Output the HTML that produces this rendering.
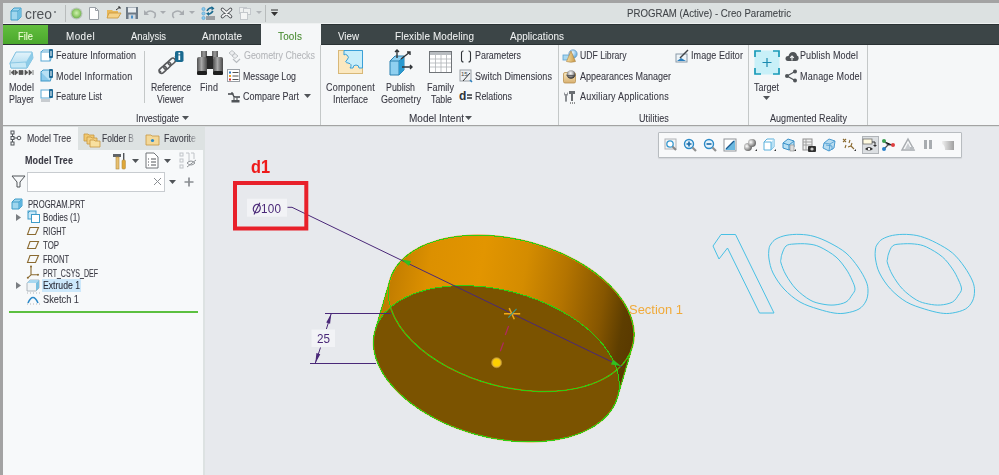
<!DOCTYPE html>
<html><head><meta charset="utf-8"><style>
html,body{margin:0;padding:0;width:999px;height:475px;overflow:hidden;position:relative;font-family:"Liberation Sans",sans-serif}
.t{position:absolute;white-space:nowrap;line-height:1;transform-origin:0 0;-webkit-text-stroke:0.08px currentColor}
svg{overflow:visible}
</style></head><body>
<div style="position:absolute;left:0px;top:0px;width:999px;height:475px;background:#a3a3a3"></div>
<div style="position:absolute;left:3px;top:3px;width:996px;height:20px;background:#dce1e1"></div>
<div style="position:absolute;left:3px;top:23px;width:996px;height:1px;background:#eef1f1"></div>
<div style="position:absolute;left:3px;top:24px;width:996px;height:21px;background:#3c4547"></div>
<div style="position:absolute;left:3px;top:24px;width:996px;height:1px;background:#2a3234"></div>
<div style="position:absolute;left:3px;top:44px;width:996px;height:1px;background:#2a3234"></div>
<div style="position:absolute;left:3px;top:45px;width:996px;height:80px;background:#f5f7f8"></div>
<div style="position:absolute;left:3px;top:125.6px;width:996px;height:1.8px;background:#d9dede"></div>
<div style="position:absolute;left:3px;top:127px;width:202px;height:348px;background:#dde2e2"></div>
<div style="position:absolute;left:3px;top:150px;width:199.5px;height:325px;background:#f7f9fa"></div>
<div style="position:absolute;left:3px;top:127px;width:75px;height:23px;background:#f5f7f8"></div>
<div style="position:absolute;left:205px;top:127px;width:794px;height:348px;background:#e7e9ed"></div>
<svg style="position:absolute;left:9px;top:7px" width="13" height="14" viewBox="0 0 13 14"><path d="M2 4 L5 1 L12 1 L12 10 L9 13 L2 13 Z" fill="#9fd6ee" stroke="#3f9cc8" stroke-width="1"/><path d="M2 4 L9 4 L12 1 M9 4 L9 13" fill="none" stroke="#3f9cc8" stroke-width="1"/><path d="M9 4 L12 1 L12 10 L9 13Z" fill="#6dbde0"/></svg>
<div class="t" style="left:25.0px;top:6.5px;font-size:14px;color:#505458;transform:scaleX(0.991);letter-spacing:0.00px;-webkit-text-stroke:0">creo</div>
<div style="position:absolute;left:54px;top:11px;width:2px;height:2px;background:#707478;border-radius:1px"></div>
<div style="position:absolute;left:65px;top:5px;width:1px;height:17px;background:#b8bcbc"></div>
<svg style="position:absolute;left:70px;top:7px" width="13" height="13" viewBox="0 0 13 13"><defs><radialGradient id="gc" cx="50%" cy="45%" r="55%"><stop offset="0" stop-color="#d0f0b0"/><stop offset="0.6" stop-color="#98d070"/><stop offset="1" stop-color="#70b050"/></radialGradient></defs><circle cx="6.5" cy="6.5" r="6" fill="#b8c4b8"/><circle cx="6.5" cy="6.5" r="4.8" fill="url(#gc)"/></svg>
<svg style="position:absolute;left:88px;top:6px" width="12" height="15" viewBox="0 0 12 15"><path d="M1.5 1.5 L7.5 1.5 L10.5 4.5 L10.5 13.5 L1.5 13.5Z" fill="#fff" stroke="#9aa0a6"/><path d="M7.5 1.5 L7.5 4.5 L10.5 4.5" fill="none" stroke="#9aa0a6"/></svg>
<svg style="position:absolute;left:106px;top:6px" width="16" height="14" viewBox="0 0 16 14"><path d="M1 4 L6 4 L7 5 L12 5 L12 12 L1 12Z" fill="#e8b85a"/><path d="M3 7 L15 7 L12 12 L1 12Z" fill="#f5d288" stroke="#c8963a" stroke-width="0.8"/><path d="M10 4 L14 1 M12 1 L14 1 L14 3" stroke="#333" fill="none" stroke-width="1"/></svg>
<svg style="position:absolute;left:125px;top:6px" width="14" height="14" viewBox="0 0 14 14"><rect x="1" y="1" width="12" height="12" fill="#6e7a86"/><rect x="3" y="1.5" width="8" height="5" fill="#e8ecef"/><rect x="3.5" y="8.5" width="7" height="4.5" fill="#d0d8e0"/><rect x="6" y="9.5" width="2" height="3" fill="#4a90c8"/></svg>
<svg style="position:absolute;left:143px;top:8px" width="14" height="11" viewBox="0 0 14 11"><path d="M3 5 Q7 1 12 5 Q13 8 11 10" fill="none" stroke="#a8acb0" stroke-width="1.6"/><path d="M1 2 L1 7 L6 7Z" fill="#a8acb0"/></svg>
<svg style="position:absolute;left:160px;top:11px" width="6" height="4" viewBox="0 0 6 4"><path d="M0 0 L6 0 L3 3Z" fill="#a8acb0"/></svg>
<svg style="position:absolute;left:171px;top:8px" width="14" height="11" viewBox="0 0 14 11"><path d="M11 5 Q7 1 2 5 Q1 8 3 10" fill="none" stroke="#a8acb0" stroke-width="1.6"/><path d="M13 2 L13 7 L8 7Z" fill="#a8acb0"/></svg>
<svg style="position:absolute;left:189px;top:11px" width="6" height="4" viewBox="0 0 6 4"><path d="M0 0 L6 0 L3 3Z" fill="#a8acb0"/></svg>
<svg style="position:absolute;left:201px;top:5px" width="15" height="16" viewBox="0 0 15 16"><circle cx="2.5" cy="4" r="1.6" fill="#8ccbec" stroke="#4a9ad0" stroke-width="0.6"/><circle cx="2.5" cy="8.5" r="1.6" fill="#8ccbec" stroke="#4a9ad0" stroke-width="0.6"/><circle cx="2.5" cy="13" r="1.6" fill="#8ccbec" stroke="#4a9ad0" stroke-width="0.6"/><rect x="5" y="11" width="9" height="4" fill="#9a9ea2"/><path d="M6 6 Q8 2 12 3 M12 6 Q10 9 7 9" fill="none" stroke="#1a6a90" stroke-width="1.5"/><path d="M10.5 1 L13.5 3.5 L10.5 5.5Z M8 7 L5 8.5 L8 11Z" fill="#1a6a90"/></svg>
<svg style="position:absolute;left:220px;top:7px" width="13" height="12" viewBox="0 0 13 12"><path d="M2.5 2.5 L10.5 9.5 M10.5 2.5 L2.5 9.5" stroke="#505458" stroke-width="3.6" stroke-linecap="round"/><path d="M2.5 2.5 L10.5 9.5 M10.5 2.5 L2.5 9.5" stroke="#f4f4f4" stroke-width="1.7" stroke-linecap="round"/></svg>
<svg style="position:absolute;left:238px;top:6px" width="14" height="15" viewBox="0 0 14 15"><rect x="1.5" y="1.5" width="7" height="6" fill="#eef0f0" stroke="#c4c8cc"/><rect x="5.5" y="2.5" width="7" height="6" fill="#eef0f0" stroke="#c4c8cc"/><rect x="2.5" y="6.5" width="7" height="7" fill="#f4f5f5" stroke="#c4c8cc"/></svg>
<svg style="position:absolute;left:256px;top:11px" width="6" height="4" viewBox="0 0 6 4"><path d="M0 0 L6 0 L3 3Z" fill="#b0b4b8"/></svg>
<div style="position:absolute;left:265px;top:5px;width:1px;height:17px;background:#b8bcbc"></div>
<svg style="position:absolute;left:271px;top:10px" width="8" height="6" viewBox="0 0 8 6"><path d="M0 0 L7 0" stroke="#333" stroke-width="1"/><path d="M0 2 L7 2 L3.5 6Z" fill="#333"/></svg>
<div class="t" style="left:627.0px;top:8.0px;font-size:11px;color:#404448;transform:scaleX(0.877);letter-spacing:0.00px;">PROGRAM (Active) - Creo Parametric</div>
<div style="position:absolute;left:3px;top:25px;width:45px;height:19px;background:linear-gradient(#62be3e,#4aa82c)"></div>
<div class="t" style="left:18.0px;top:30.6px;font-size:11px;color:#f0fcd8;transform:scaleX(0.846);letter-spacing:0.00px;">File</div>
<div class="t" style="left:66.0px;top:30.6px;font-size:11px;color:#f0f2f2;transform:scaleX(0.900);letter-spacing:0.45px;-webkit-text-stroke:0.05px currentColor">Model</div>
<div class="t" style="left:131.0px;top:30.6px;font-size:11px;color:#f0f2f2;transform:scaleX(0.854);letter-spacing:0.00px;-webkit-text-stroke:0.05px currentColor">Analysis</div>
<div class="t" style="left:202.0px;top:30.6px;font-size:11px;color:#f0f2f2;transform:scaleX(0.900);letter-spacing:0.05px;-webkit-text-stroke:0.05px currentColor">Annotate</div>
<div style="position:absolute;left:261px;top:24px;width:60px;height:21px;background:#f5f7f8"></div>
<div class="t" style="left:278.0px;top:30.5px;font-size:11px;color:#468a2e;transform:scaleX(0.900);letter-spacing:0.20px;">Tools</div>
<div class="t" style="left:338.0px;top:30.6px;font-size:11px;color:#f0f2f2;transform:scaleX(0.888);letter-spacing:0.00px;-webkit-text-stroke:0.05px currentColor">View</div>
<div class="t" style="left:395.0px;top:30.6px;font-size:11px;color:#f0f2f2;transform:scaleX(0.900);letter-spacing:0.13px;-webkit-text-stroke:0.05px currentColor">Flexible Modeling</div>
<div class="t" style="left:510.0px;top:30.6px;font-size:11px;color:#f0f2f2;transform:scaleX(0.900);letter-spacing:0.06px;-webkit-text-stroke:0.05px currentColor">Applications</div>
<svg style="position:absolute;left:8px;top:49px" width="27" height="26" viewBox="0 0 27 26"><defs><linearGradient id="mp" x1="0" y1="0" x2="0" y2="1"><stop offset="0" stop-color="#e4f4fb"/><stop offset="1" stop-color="#a8d8ee"/></linearGradient></defs><path d="M2 14 L8 3 L24 3 L25 9 L19 19 L3 19 Z" fill="url(#mp)" stroke="#7ec0e0" stroke-width="1"/><path d="M19 19 L25 9 L24 3 L18 13Z" fill="#8ccbe8"/><path d="M2 14 L3 19 L19 19 L18 13Z" fill="#c6e8f6" stroke="#7ec0e0" stroke-width="0.8"/><path d="M2 21 L2 26 M3 23.5 L6 21 L6 26Z M10 23.5 L7 21 L7 26Z M11 21.5 h4 v4 h-4Z M17 21 L20 23.5 L17 26Z M21 21 L24 23.5 L21 26Z M25 21 L25 26" fill="#555" stroke="#555" stroke-width="0.7"/></svg>
<div class="t" style="left:9.0px;top:82.5px;font-size:10px;color:#383842;transform:scaleX(0.900);letter-spacing:0.11px;">Model</div>
<div class="t" style="left:9.0px;top:94.5px;font-size:10px;color:#383842;transform:scaleX(0.882);letter-spacing:0.00px;">Player</div>
<svg style="position:absolute;left:40px;top:49px" width="14" height="14" viewBox="0 0 14 14"><rect x="1" y="3" width="9" height="9" fill="#fff" stroke="#5aaad6"/><path d="M1 3 L3 1 L11 1 L11 10 L10 12" fill="none" stroke="#5aaad6"/><rect x="9" y="0" width="4" height="9" rx="1" fill="#1e6a96"/><rect x="10.5" y="2" width="1" height="5" fill="#fff"/></svg>
<div class="t" style="left:56.0px;top:51.2px;font-size:10px;color:#383842;transform:scaleX(0.900);letter-spacing:0.09px;">Feature Information</div>
<svg style="position:absolute;left:40px;top:69px" width="14" height="14" viewBox="0 0 14 14"><rect x="1" y="3" width="9" height="9" fill="#8ccbec" stroke="#3e98c8"/><path d="M1 3 L3 1 L11 1 L11 10 L10 12" fill="#b8e0f4" stroke="#3e98c8"/><rect x="9" y="0" width="4" height="9" rx="1" fill="#1e6a96"/><rect x="10.5" y="2" width="1" height="5" fill="#fff"/></svg>
<div class="t" style="left:56.0px;top:72.0px;font-size:10px;color:#383842;transform:scaleX(0.900);letter-spacing:0.29px;">Model Information</div>
<svg style="position:absolute;left:40px;top:89px" width="14" height="14" viewBox="0 0 14 14"><rect x="1" y="1" width="9" height="8" fill="#fff" stroke="#5aaad6"/><rect x="1" y="10" width="9" height="3" fill="#c8ccd0"/><rect x="9" y="0" width="4" height="9" rx="1" fill="#1e6a96"/><rect x="10.5" y="2" width="1" height="5" fill="#fff"/></svg>
<div class="t" style="left:56.0px;top:92.0px;font-size:10px;color:#383842;transform:scaleX(0.871);letter-spacing:0.00px;">Feature List</div>
<div style="position:absolute;left:144px;top:51px;width:1px;height:52px;background:#c4c8c8"></div>
<svg style="position:absolute;left:158px;top:49px" width="27" height="26" viewBox="0 0 27 26"><g transform="rotate(-42 10 16)" fill="none" stroke="#58595c" stroke-width="1.6"><rect x="-1" y="13.5" width="8" height="5" rx="2.5"/><rect x="5" y="13.5" width="8" height="5" rx="2.5"/><rect x="11" y="13.5" width="8" height="5" rx="2.5"/></g><path d="M1 24 L3 22 M17 8 L19 6" stroke="#58595c" stroke-width="1.4"/><rect x="17" y="2" width="8.5" height="11" rx="1.8" fill="#1a6a90"/><rect x="20.4" y="3.6" width="1.8" height="1.8" fill="#fff"/><rect x="20.4" y="6.4" width="1.8" height="4.6" fill="#fff"/></svg>
<div class="t" style="left:151.0px;top:82.5px;font-size:10px;color:#383842;transform:scaleX(0.867);letter-spacing:0.00px;">Reference</div>
<div class="t" style="left:157.0px;top:94.5px;font-size:10px;color:#383842;transform:scaleX(0.889);letter-spacing:0.00px;">Viewer</div>
<svg style="position:absolute;left:196px;top:49px" width="28" height="27" viewBox="0 0 28 27"><defs><linearGradient id="bn" x1="0" x2="1"><stop offset="0" stop-color="#505050"/><stop offset="0.45" stop-color="#a8a8a8"/><stop offset="1" stop-color="#484848"/></linearGradient><linearGradient id="bt" x1="0" x2="1"><stop offset="0" stop-color="#606060"/><stop offset="0.5" stop-color="#9a9a9a"/><stop offset="1" stop-color="#505050"/></linearGradient></defs><rect x="5" y="2" width="6" height="7" fill="url(#bt)"/><rect x="16" y="2" width="6" height="7" fill="url(#bt)"/><rect x="10" y="7" width="7" height="13" fill="#2a2a2a"/><rect x="1" y="8" width="10" height="18" rx="2" fill="url(#bn)"/><rect x="17" y="8" width="10" height="18" rx="2" fill="url(#bn)"/><rect x="1" y="22" width="10" height="4" rx="1.5" fill="#1e1e1e"/><rect x="17" y="22" width="10" height="4" rx="1.5" fill="#1e1e1e"/></svg>
<div class="t" style="left:200.0px;top:82.5px;font-size:10px;color:#383842;transform:scaleX(0.900);letter-spacing:0.14px;">Find</div>
<svg style="position:absolute;left:227px;top:49px" width="15" height="15" viewBox="0 0 15 15"><path d="M2 4 L5 1.5 L8 4 L5 6.5Z M5 7 L8 4.5 L11 7 L8 9.5Z" fill="#eceef0" stroke="#b8bcc0" stroke-width="0.9"/><path d="M6 10 L9.5 13.5 L13 10" fill="none" stroke="#b8bcc0" stroke-width="1.2"/></svg>
<div class="t" style="left:243.5px;top:51.2px;font-size:10px;color:#b4b6ba;transform:scaleX(0.887);letter-spacing:0.00px;">Geometry Checks</div>
<svg style="position:absolute;left:227px;top:69px" width="14" height="13" viewBox="0 0 14 13"><rect x="0.5" y="0.5" width="12" height="12" fill="#fff" stroke="#9aa0a6"/><rect x="2" y="2.5" width="2" height="2" fill="#2a78c0"/><rect x="2" y="6" width="2" height="2" fill="#f0a020"/><rect x="2" y="9.5" width="2" height="2" fill="#d03030"/><path d="M5.5 3.5 h6 M5.5 7 h6 M5.5 10.5 h6" stroke="#555"/></svg>
<div class="t" style="left:243.0px;top:72.0px;font-size:10px;color:#383842;transform:scaleX(0.883);letter-spacing:0.00px;">Message Log</div>
<svg style="position:absolute;left:227px;top:89px" width="15" height="15" viewBox="0 0 15 15"><path d="M1 5 H6 Q6 8 9 8 H13" fill="none" stroke="#404448" stroke-width="1.3"/><path d="M5 5 V3" stroke="#404448" stroke-width="1.2"/><path d="M7 8 L7 11 M10 8 L10 11" stroke="#606468" stroke-width="1.2"/><rect x="4.5" y="11" width="8" height="2.5" fill="#505458"/></svg>
<div class="t" style="left:243.0px;top:92.0px;font-size:10px;color:#383842;transform:scaleX(0.900);letter-spacing:0.00px;">Compare Part</div>
<svg style="position:absolute;left:304px;top:94px" width="7" height="5" viewBox="0 0 7 5"><path d="M0 0 L7 0 L3.5 4Z" fill="#505458"/></svg>
<div class="t" style="left:136.0px;top:113.8px;font-size:10px;color:#383842;transform:scaleX(0.889);letter-spacing:0.00px;">Investigate</div>
<svg style="position:absolute;left:182px;top:116px" width="7" height="5" viewBox="0 0 7 5"><path d="M0 0 L7 0 L3.5 4Z" fill="#505458"/></svg>
<div style="position:absolute;left:320px;top:45px;width:1px;height:80px;background:#c4c8c8"></div>
<svg style="position:absolute;left:337px;top:49px" width="27" height="26" viewBox="0 0 27 26"><rect x="1.5" y="1.5" width="24" height="23" fill="#fbe8c0" stroke="#d8b878" stroke-width="1"/><path d="M7 1.5 H25.5 V19 H22 Q22 16 19 16 Q16 16 16 19 H13 Q16 15 11 14 Q7 13.5 10 11 Q13 8 10 6 Q8 4.5 7 6Z" fill="#c8eefa" stroke="#3aa0d8" stroke-width="1"/></svg>
<div class="t" style="left:326.0px;top:82.5px;font-size:10px;color:#383842;transform:scaleX(0.900);letter-spacing:0.30px;">Component</div>
<div class="t" style="left:333.0px;top:94.5px;font-size:10px;color:#383842;transform:scaleX(0.899);letter-spacing:0.00px;">Interface</div>
<svg style="position:absolute;left:387px;top:49px" width="27" height="27" viewBox="0 0 27 27"><path d="M3 12 L8 7 L17 7 L17 21 L12 26 L3 26Z" fill="#8fd0f0" stroke="#2a80b0"/><path d="M3 12 L12 12 L17 7 M12 12 L12 26" fill="none" stroke="#2a80b0"/><path d="M12 12 L17 7 L17 21 L12 26Z" fill="#2a9ad0"/><path d="M10 9 L10 1 M8 3 L10 1 L12 3 M14 10 L23 3 M20 3 L23 3 L23 6 M15 18 L25 18 M23 16 L25 18 L23 20" fill="none" stroke="#303438" stroke-width="1.4"/></svg>
<div class="t" style="left:386.0px;top:82.5px;font-size:10px;color:#383842;transform:scaleX(0.884);letter-spacing:0.00px;">Publish</div>
<div class="t" style="left:381.0px;top:94.5px;font-size:10px;color:#383842;transform:scaleX(0.900);letter-spacing:0.07px;">Geometry</div>
<svg style="position:absolute;left:428px;top:50px" width="26" height="24" viewBox="0 0 26 24"><rect x="1.5" y="1.5" width="22" height="21" fill="#fff" stroke="#707478" stroke-width="1"/><rect x="2" y="2" width="21" height="3" fill="#b8bcc0"/><path d="M2 9 h21 M2 13 h21 M2 17 h21 M7.5 5 v17 M13 5 v17 M18.5 5 v17" stroke="#b0b4b8" stroke-width="0.8"/></svg>
<div class="t" style="left:427.0px;top:82.5px;font-size:10px;color:#383842;transform:scaleX(0.900);letter-spacing:0.09px;">Family</div>
<div class="t" style="left:431.0px;top:94.5px;font-size:10px;color:#383842;transform:scaleX(0.878);letter-spacing:0.00px;">Table</div>
<svg style="position:absolute;left:459px;top:50px" width="14" height="13" viewBox="0 0 14 13"><path d="M4.5 1 Q2.5 1 2.5 3 V10 Q2.5 12 4.5 12 M9.5 1 Q11.5 1 11.5 3 V10 Q11.5 12 9.5 12" fill="none" stroke="#303438" stroke-width="1.1"/></svg>
<div class="t" style="left:475.0px;top:51.2px;font-size:10px;color:#383842;transform:scaleX(0.890);letter-spacing:0.00px;">Parameters</div>
<svg style="position:absolute;left:459px;top:69px" width="14" height="14" viewBox="0 0 14 14"><rect x="1" y="1" width="11" height="11" fill="#eef0f2" stroke="#9aa0a6"/><text x="2" y="7" font-size="6" font-family="Liberation Sans" fill="#444">15</text><path d="M4 12 L11 4" stroke="#333"/><path d="M11 11 L13 13" stroke="#2a80c0" stroke-width="1.5"/></svg>
<div class="t" style="left:475.0px;top:72.0px;font-size:10px;color:#383842;transform:scaleX(0.900);letter-spacing:0.06px;">Switch Dimensions</div>
<svg style="position:absolute;left:459px;top:90px" width="14" height="12" viewBox="0 0 14 12"><text x="0" y="10" font-size="12" font-weight="bold" font-family="Liberation Sans" fill="#303438">d</text><path d="M8 5 h5 M8 8 h5" stroke="#303438" stroke-width="1.4"/></svg>
<div class="t" style="left:475.0px;top:92.0px;font-size:10px;color:#383842;transform:scaleX(0.887);letter-spacing:0.00px;">Relations</div>
<div class="t" style="left:409.0px;top:113.8px;font-size:10px;color:#383842;transform:scaleX(0.999);letter-spacing:0.00px;">Model Intent</div>
<svg style="position:absolute;left:465px;top:116px" width="7" height="5" viewBox="0 0 7 5"><path d="M0 0 L7 0 L3.5 4Z" fill="#505458"/></svg>
<div style="position:absolute;left:558px;top:45px;width:1px;height:80px;background:#c4c8c8"></div>
<svg style="position:absolute;left:562px;top:49px" width="16" height="14" viewBox="0 0 16 14"><defs><radialGradient id="us" cx="40%" cy="35%" r="60%"><stop offset="0" stop-color="#f0faff"/><stop offset="1" stop-color="#6ab0e0"/></radialGradient><linearGradient id="uc" x1="0" x2="1"><stop offset="0" stop-color="#f8e0a0"/><stop offset="1" stop-color="#c89848"/></linearGradient></defs><rect x="1" y="6" width="7" height="5" fill="#a8d8f0" stroke="#5aa0d0" stroke-width="0.8"/><circle cx="11" cy="5" r="4.2" fill="url(#us)" stroke="#6a9ac0" stroke-width="0.7"/><path d="M9 2 L13.5 12.5 Q9 14 4.5 12.5Z" fill="url(#uc)" stroke="#a88040" stroke-width="0.6"/></svg>
<div class="t" style="left:579.5px;top:51.2px;font-size:10px;color:#383842;transform:scaleX(0.863);letter-spacing:0.00px;">UDF Library</div>
<svg style="position:absolute;left:562px;top:69px" width="16" height="15" viewBox="0 0 16 15"><defs><radialGradient id="am" cx="45%" cy="35%" r="60%"><stop offset="0" stop-color="#ffffff"/><stop offset="0.5" stop-color="#b0b0b0"/><stop offset="1" stop-color="#303030"/></radialGradient><linearGradient id="ab" x1="0" y1="0" x2="0" y2="1"><stop offset="0" stop-color="#f8e8c0"/><stop offset="1" stop-color="#d8b070"/></linearGradient></defs><rect x="1.5" y="3.5" width="12" height="10.5" rx="1.5" fill="url(#ab)" stroke="#b89050" stroke-width="0.8"/><circle cx="9" cy="5.5" r="4.3" fill="url(#am)"/><path d="M4.5 6.5 H13.5" stroke="#505050" stroke-width="0.8"/></svg>
<div class="t" style="left:579.5px;top:72.0px;font-size:10px;color:#383842;transform:scaleX(0.899);letter-spacing:0.00px;">Appearances Manager</div>
<svg style="position:absolute;left:562px;top:89px" width="16" height="15" viewBox="0 0 16 15"><path d="M3 3 Q1 5 3 7 L3 12 Q4 14 5 12 L5 7 Q7 5 5 3 L5 5 L3 5Z" fill="#8a8e92"/><path d="M7 2 H13 V5 H11 V12 H9 V5 H7Z" fill="#6a6e72"/><path d="M8 14 h1 M10 14 h1 M12 14 h1" stroke="#303030"/></svg>
<div class="t" style="left:579.5px;top:92.0px;font-size:10px;color:#383842;transform:scaleX(0.900);letter-spacing:0.22px;">Auxiliary Applications</div>
<svg style="position:absolute;left:675px;top:49px" width="15" height="14" viewBox="0 0 15 14"><rect x="1" y="5" width="11" height="8" fill="#eef4f8" stroke="#8a9aa8"/><path d="M2 12 L6 9 L11 12Z" fill="#2a80c0"/><path d="M5 9 L13 1" stroke="#404448" stroke-width="1.5"/></svg>
<div class="t" style="left:691.0px;top:51.2px;font-size:10px;color:#383842;transform:scaleX(0.900);letter-spacing:0.09px;">Image Editor</div>
<div class="t" style="left:639.0px;top:113.8px;font-size:10px;color:#383842;transform:scaleX(0.900);letter-spacing:0.12px;">Utilities</div>
<div style="position:absolute;left:748px;top:45px;width:1px;height:80px;background:#c4c8c8"></div>
<svg style="position:absolute;left:754px;top:50px" width="26" height="25" viewBox="0 0 26 25"><rect x="0.5" y="0.5" width="25" height="24" fill="#c8f0f8"/><path d="M1 7 V1 H7 M19 1 H25 V7 M25 18 V24 H19 M7 24 H1 V18" fill="none" stroke="#1a9ab8" stroke-width="1.7"/><path d="M13 8 V17 M8.5 12.5 H17.5" stroke="#1a8ab0" stroke-width="1.2"/></svg>
<div class="t" style="left:754.0px;top:82.5px;font-size:10px;color:#383842;transform:scaleX(0.899);letter-spacing:0.00px;">Target</div>
<svg style="position:absolute;left:763px;top:96px" width="7" height="5" viewBox="0 0 7 5"><path d="M0 0 L7 0 L3.5 4Z" fill="#505458"/></svg>
<svg style="position:absolute;left:785px;top:51px" width="14" height="11" viewBox="0 0 14 11"><path d="M3 10 Q0.3 10 0.5 7 Q0.8 4.8 3.5 5 Q4.5 1 8 1 Q11.5 1 12 4.5 Q14 5 13.7 7.5 Q13.3 10 11 10Z" fill="#505458"/><path d="M7 9.5 V5 M5.2 6.8 L7 5 L8.8 6.8" stroke="#f5f7f8" stroke-width="1.1" fill="none"/></svg>
<div class="t" style="left:800.0px;top:51.2px;font-size:10px;color:#383842;transform:scaleX(0.900);letter-spacing:0.13px;">Publish Model</div>
<svg style="position:absolute;left:784px;top:69px" width="14" height="14" viewBox="0 0 14 14"><path d="M11 2.5 L3 7 L11 11.5" fill="none" stroke="#505458" stroke-width="1.2"/><circle cx="11" cy="2.5" r="2" fill="#505458"/><circle cx="3" cy="7" r="2" fill="#505458"/><circle cx="11" cy="11.5" r="2" fill="#505458"/></svg>
<div class="t" style="left:800.0px;top:72.0px;font-size:10px;color:#383842;transform:scaleX(0.900);letter-spacing:0.23px;">Manage Model</div>
<div class="t" style="left:770.0px;top:113.8px;font-size:10px;color:#383842;transform:scaleX(0.900);letter-spacing:0.06px;">Augmented Reality</div>
<div style="position:absolute;left:867px;top:45px;width:1px;height:80px;background:#c4c8c8"></div>
<svg style="position:absolute;left:10px;top:130px" width="13" height="16" viewBox="0 0 13 16"><rect x="1" y="1" width="3" height="3" fill="none" stroke="#505458"/><rect x="1" y="6.5" width="3" height="3" fill="none" stroke="#505458"/><rect x="1" y="12" width="3" height="3" fill="none" stroke="#505458"/><circle cx="9" cy="8" r="1.8" fill="none" stroke="#505458"/><path d="M2.5 4 V6.5 M2.5 9.5 V12 M4 8 H7" stroke="#505458"/></svg>
<div class="t" style="left:27.0px;top:134.3px;font-size:10px;color:#383842;transform:scaleX(0.880);letter-spacing:0.00px;">Model Tree</div>
<svg style="position:absolute;left:83px;top:131px" width="18" height="17" viewBox="0 0 18 17"><path d="M1 3 h4 l1 1 h5 v6 h-10Z" fill="#f0c870" stroke="#c89840" stroke-width="0.8"/><path d="M4 6 h4 l1 1 h5 v6 h-10Z" fill="#f3d080" stroke="#c89840" stroke-width="0.8"/><path d="M7 9 h4 l1 1 h5 v6 h-10Z" fill="#f8e0a0" stroke="#c89840" stroke-width="0.8"/></svg>
<div class="t" style="left:102.0px;top:134.3px;font-size:10px;color:#383842;transform:scaleX(0.847);letter-spacing:0.00px;-webkit-mask-image:linear-gradient(90deg,#000 75%,rgba(0,0,0,0.2));">Folder B</div>
<svg style="position:absolute;left:145px;top:132px" width="15" height="14" viewBox="0 0 15 14"><path d="M1 3 h5 l1 1 h7 v9 h-13Z" fill="#f3d898" stroke="#c89840" stroke-width="0.8"/><circle cx="7.5" cy="8.5" r="1.6" fill="#2a88c8"/></svg>
<div class="t" style="left:164.0px;top:134.3px;font-size:10px;color:#383842;transform:scaleX(0.886);letter-spacing:0.00px;-webkit-mask-image:linear-gradient(90deg,#000 75%,rgba(0,0,0,0.2));">Favorite</div>
<div class="t" style="left:25.0px;top:156.0px;font-size:10px;color:#3a3a44;transform:scaleX(0.900);letter-spacing:0.11px;font-weight:bold;">Model Tree</div>
<svg style="position:absolute;left:112px;top:152px" width="16" height="18" viewBox="0 0 16 18"><path d="M1 2 L9 2 L9 5 L1 5Z" fill="#606468"/><rect x="4" y="5" width="3" height="12" fill="#e8c070" stroke="#b08a40" stroke-width="0.6"/><rect x="11" y="1" width="1.4" height="7" fill="#505458"/><rect x="10" y="8" width="3.4" height="9" rx="1" fill="#e0a838" stroke="#b08a40" stroke-width="0.6"/></svg>
<svg style="position:absolute;left:132px;top:159px" width="7" height="5" viewBox="0 0 7 5"><path d="M0 0 L7 0 L3.5 4Z" fill="#505458"/></svg>
<svg style="position:absolute;left:145px;top:152px" width="14" height="17" viewBox="0 0 14 17"><path d="M1 1 H9 L13 5 V16 H1Z" fill="#fff" stroke="#707478"/><path d="M3 7 h1 M6 7 h5 M3 10 h1 M6 10 h5 M3 13 h1 M6 13 h5" stroke="#505458"/></svg>
<svg style="position:absolute;left:164px;top:159px" width="7" height="5" viewBox="0 0 7 5"><path d="M0 0 L7 0 L3.5 4Z" fill="#505458"/></svg>
<svg style="position:absolute;left:179px;top:152px" width="18" height="17" viewBox="0 0 18 17"><rect x="1" y="1" width="3" height="3" fill="none" stroke="#c0c4c8"/><rect x="1" y="7" width="3" height="3" fill="none" stroke="#c0c4c8"/><rect x="1" y="13" width="3" height="3" fill="none" stroke="#c0c4c8"/><path d="M7 1 h3 v9 M12 1 h3 v6" fill="none" stroke="#c0c4c8"/><path d="M8 11 Q12 7 16 11 Q12 15 8 11Z M8 15 L17 8" fill="none" stroke="#909498"/></svg>
<svg style="position:absolute;left:11px;top:175px" width="15" height="13" viewBox="0 0 15 13"><path d="M1 1 H14 L9 7 V12 L6 12 V7Z" fill="none" stroke="#505458" stroke-width="1"/></svg>
<div style="position:absolute;left:27px;top:172px;width:138px;height:20px;background:#fff;border:1px solid #c8ccd0;box-sizing:border-box"></div>
<svg style="position:absolute;left:153px;top:177px" width="9" height="9" viewBox="0 0 9 9"><path d="M1 1 L8 8 M8 1 L1 8" stroke="#8a8e92" stroke-width="1"/></svg>
<svg style="position:absolute;left:169px;top:180px" width="7" height="5" viewBox="0 0 7 5"><path d="M0 0 L7 0 L3.5 4Z" fill="#505458"/></svg>
<svg style="position:absolute;left:183px;top:176px" width="12" height="12" viewBox="0 0 12 12"><path d="M6 1.5 V10.5 M1.5 6 H10.5" stroke="#8a8e92" stroke-width="1.7"/></svg>
<svg style="position:absolute;left:11px;top:198px" width="12" height="12" viewBox="0 0 12 12"><path d="M1 4 L4 1 L11 1 L11 8 L8 11 L1 11Z" fill="#9fd6ee" stroke="#3f9cc8"/><path d="M1 4 L8 4 L11 1 M8 4 L8 11" fill="none" stroke="#3f9cc8"/><path d="M8 4 L11 1 L11 8 L8 11Z" fill="#5db4de"/></svg>
<div class="t" style="left:28.0px;top:199.1px;font-size:10.5px;color:#383842;transform:scaleX(0.731);letter-spacing:0.00px;">PROGRAM.PRT</div>
<svg style="position:absolute;left:15px;top:212.5px" width="7" height="9" viewBox="0 0 7 9"><path d="M1 1 L6 4.5 L1 8Z" fill="#7a7e82"/></svg>
<svg style="position:absolute;left:27px;top:210px" width="14" height="14" viewBox="0 0 14 14"><rect x="1" y="1" width="8" height="8" fill="#c8e8f8" stroke="#3f9cc8"/><rect x="4.5" y="4.5" width="8" height="8" fill="#fff" stroke="#3f9cc8"/><path d="M1 3 L3 1" stroke="#3f9cc8"/></svg>
<div class="t" style="left:43.0px;top:212.7px;font-size:10.3px;color:#383842;transform:scaleX(0.788);letter-spacing:0.00px;">Bodies (1)</div>
<svg style="position:absolute;left:26px;top:225.5px" width="14" height="10" viewBox="0 0 14 10"><path d="M4 1.5 L12.5 1.5 L9.5 8.5 L1.5 8.5Z" fill="none" stroke="#8a6a30" stroke-width="1.1"/></svg>
<div class="t" style="left:43.0px;top:226.1px;font-size:10.5px;color:#383842;transform:scaleX(0.704);letter-spacing:0.00px;">RIGHT</div>
<svg style="position:absolute;left:26px;top:239.5px" width="14" height="10" viewBox="0 0 14 10"><path d="M4 1.5 L12.5 1.5 L9.5 8.5 L1.5 8.5Z" fill="none" stroke="#8a6a30" stroke-width="1.1"/></svg>
<div class="t" style="left:43.0px;top:240.1px;font-size:10.5px;color:#383842;transform:scaleX(0.748);letter-spacing:0.00px;">TOP</div>
<svg style="position:absolute;left:26px;top:253.5px" width="14" height="10" viewBox="0 0 14 10"><path d="M4 1.5 L12.5 1.5 L9.5 8.5 L1.5 8.5Z" fill="none" stroke="#8a6a30" stroke-width="1.1"/></svg>
<div class="t" style="left:43.0px;top:254.1px;font-size:10.5px;color:#383842;transform:scaleX(0.719);letter-spacing:0.00px;">FRONT</div>
<svg style="position:absolute;left:26px;top:265px" width="14" height="14" viewBox="0 0 14 14"><path d="M5 1.5 V9.8 H12 M5 9.8 L1.8 12.8" fill="none" stroke="#8a6a30" stroke-width="1.1"/><circle cx="5" cy="1.5" r="1" fill="#8a6a30"/><circle cx="12" cy="9.8" r="1" fill="#8a6a30"/><circle cx="1.8" cy="12.8" r="1" fill="#8a6a30"/></svg>
<div class="t" style="left:43.0px;top:267.6px;font-size:10.5px;color:#383842;transform:scaleX(0.670);letter-spacing:0.00px;">PRT_CSYS_DEF</div>
<svg style="position:absolute;left:15px;top:281px" width="7" height="9" viewBox="0 0 7 9"><path d="M1 1 L6 4.5 L1 8Z" fill="#7a7e82"/></svg>
<div style="position:absolute;left:42px;top:279px;width:39px;height:13px;background:#cce8fb"></div>
<svg style="position:absolute;left:26px;top:279px" width="14" height="13" viewBox="0 0 14 13"><path d="M1 4 L4 1 L13 1 L13 9 L10 12 L1 12Z" fill="#f0f4f6" stroke="#a0a8b0" stroke-width="0.8"/><path d="M4 1 L13 1 L10 4 L1 4Z" fill="#a8d8f0"/><path d="M10 4 L13 1 L13 9 L10 12Z" fill="#7ac0e0"/></svg>
<div class="t" style="left:43.0px;top:281.2px;font-size:10.3px;color:#2a2a36;transform:scaleX(0.839);letter-spacing:0.00px;">Extrude 1</div>
<svg style="position:absolute;left:26px;top:292px" width="14" height="13" viewBox="0 0 14 13"><path d="M1 1 h1 M4 1 h1 M7 1 h1 M10 1 h1 M13 1 h1 M1 12 h1 M4 12 h1 M7 12 h1 M10 12 h1 M13 12 h1" stroke="#b0b4b8"/><path d="M2 11 Q7 0 12 11" fill="none" stroke="#2a88c8" stroke-width="1.6"/></svg>
<div class="t" style="left:43.0px;top:295.2px;font-size:10.3px;color:#383842;transform:scaleX(0.898);letter-spacing:0.00px;">Sketch 1</div>
<div style="position:absolute;left:9px;top:311px;width:189px;height:2px;background:#5cc040"></div>
<div style="position:absolute;left:658px;top:132px;width:304px;height:26px;background:#f8f9fa;border:1px solid #b8bcc0;border-radius:1px;box-sizing:border-box;box-shadow:0 1px 1px rgba(0,0,0,0.08)"></div>
<div style="position:absolute;left:862px;top:136px;width:17px;height:18px;background:#dcdfe2;border:1px solid #b0b4b8;box-sizing:border-box"></div>
<svg style="position:absolute;left:664px;top:138px" width="15" height="15" viewBox="0 0 15 15"><rect x="1" y="1" width="11" height="10" fill="#f4f4f4" stroke="#b0b4b8"/><circle cx="6" cy="6" r="3.2" fill="#fff" stroke="#3a9ad0" stroke-width="1.3"/><path d="M8.5 8.5 L12 12" stroke="#888" stroke-width="2"/></svg>
<svg style="position:absolute;left:683px;top:138px" width="15" height="15" viewBox="0 0 15 15"><circle cx="6" cy="6" r="4.5" fill="#e8f4fb" stroke="#2a8ac8" stroke-width="1.4"/><path d="M6 3.5 V8.5 M3.5 6 H8.5" stroke="#1a6aa8" stroke-width="1.6"/><path d="M9.5 9.5 L13 13" stroke="#909090" stroke-width="2.2"/></svg>
<svg style="position:absolute;left:703px;top:138px" width="15" height="15" viewBox="0 0 15 15"><circle cx="6" cy="6" r="4.5" fill="#e8f4fb" stroke="#2a8ac8" stroke-width="1.4"/><path d="M3.5 6 H8.5" stroke="#1a6aa8" stroke-width="1.6"/><path d="M9.5 9.5 L13 13" stroke="#909090" stroke-width="2.2"/></svg>
<svg style="position:absolute;left:723px;top:138px" width="15" height="15" viewBox="0 0 15 15"><rect x="1" y="1" width="12" height="12" fill="#fff" stroke="#909498"/><path d="M2 12 L12 2 L12 12Z" fill="#6ab8e0"/><path d="M3 11 L11 3" stroke="#1a5a90" stroke-width="1.3"/></svg>
<svg style="position:absolute;left:743px;top:138px" width="15" height="15" viewBox="0 0 15 15"><defs><radialGradient id="sp" cx="35%" cy="40%" r="60%"><stop offset="0" stop-color="#fff"/><stop offset="1" stop-color="#707070"/></radialGradient></defs><circle cx="5" cy="9" r="4" fill="url(#sp)"/><circle cx="9" cy="5" r="4" fill="url(#sp)"/><path d="M12 13 L14 11 L14 13Z" fill="#333"/></svg>
<svg style="position:absolute;left:762px;top:138px" width="15" height="15" viewBox="0 0 15 15"><path d="M2 4 L5 1 L12 1 L12 9 L9 12 L2 12Z" fill="#fff" stroke="#5ab0dc"/><path d="M9 4 L12 1 L12 9 L9 12Z" fill="#b8e0f4"/><path d="M2 4 L9 4 V12" fill="none" stroke="#5ab0dc"/><path d="M12 13 L14 11 L14 13Z" fill="#333"/></svg>
<svg style="position:absolute;left:782px;top:138px" width="15" height="15" viewBox="0 0 15 15"><path d="M1 5 L6 1 L12 3 L12 9 L7 12 L1 10Z" fill="#b8e0f4" stroke="#3a90c8"/><path d="M1 5 L7 7 L12 3 M7 7 V12" fill="none" stroke="#3a90c8"/><rect x="8" y="7" width="4" height="6" fill="#ddd" stroke="#888" stroke-width="0.6"/><path d="M12 13 L14 11 L14 13Z" fill="#333"/></svg>
<svg style="position:absolute;left:802px;top:138px" width="15" height="15" viewBox="0 0 15 15"><rect x="1" y="1" width="9" height="11" fill="#f0f0f0" stroke="#909090"/><path d="M1 4 h9 M1 7 h9 M4 1 v11" stroke="#a0a0a0"/><rect x="6" y="8" width="8" height="6" rx="1" fill="#303030"/><circle cx="10" cy="11" r="1.6" fill="#ccc"/></svg>
<svg style="position:absolute;left:822px;top:138px" width="15" height="15" viewBox="0 0 15 15"><path d="M2 5 L7 1 L13 3 L12 10 L7 13 L1 10Z" fill="#b8dcf0" stroke="#4a9ad0"/><path d="M2 5 L8 6 L13 3 M8 6 L7 13 M4 7 L10 8 L10 12" fill="none" stroke="#4a9ad0" stroke-width="0.8"/></svg>
<svg style="position:absolute;left:842px;top:138px" width="15" height="15" viewBox="0 0 15 15"><path d="M1 1 L4 4 M4 1 L1 4 M8 2 L7 5 M4 7 L3 10 M6 9 L9 8 L12 11 M9 8 L10 5" stroke="#8a6a30" stroke-width="1.1" fill="none"/><path d="M12 13 L14 11 L14 13Z" fill="#333"/></svg>
<svg style="position:absolute;left:862px;top:138px" width="15" height="15" viewBox="0 0 15 15"><rect x="1" y="1" width="9" height="5" fill="#fffbe0" stroke="#707070" stroke-width="0.8"/><path d="M10 4 h3 v3" stroke="#303030" fill="none"/><path d="M11 7 L13 9 L15 7Z" fill="#303030"/><path d="M3 11 Q7 7 11 11 Q7 14 3 11Z" fill="#303030"/><circle cx="7" cy="11" r="1.2" fill="#fff"/></svg>
<svg style="position:absolute;left:881px;top:138px" width="15" height="15" viewBox="0 0 15 15"><path d="M3 3 L7 7 L12 7 M7 7 L3 11" stroke="#505458" stroke-width="1.2"/><circle cx="3" cy="3" r="2" fill="#3aa050"/><circle cx="12" cy="7" r="2" fill="#e04040"/><circle cx="3" cy="11" r="2" fill="#2a80c8"/></svg>
<svg style="position:absolute;left:901px;top:138px" width="15" height="15" viewBox="0 0 15 15"><path d="M7 1 L13 12 L1 12Z" fill="none" stroke="#a8acb0" stroke-width="1.5"/><path d="M7 5 L10 11 L4 11Z" fill="#c8ccd0"/><rect x="9" y="9" width="4" height="4" fill="#b8bcc0"/></svg>
<svg style="position:absolute;left:921px;top:138px" width="15" height="15" viewBox="0 0 15 15"><rect x="3" y="2" width="3" height="9" fill="#a8acb0"/><rect x="8" y="2" width="3" height="9" fill="#a8acb0"/></svg>
<svg style="position:absolute;left:941px;top:138px" width="15" height="15" viewBox="0 0 15 15"><defs><linearGradient id="lg" x1="0" x2="1"><stop offset="0" stop-color="#f0f0f0"/><stop offset="1" stop-color="#a0a0a0"/></linearGradient></defs><path d="M1 3 L13 3 L13 12 L4 12 Q4 7 1 6Z" fill="url(#lg)"/></svg>
<svg style="position:absolute;left:205px;top:127px" width="794" height="348" viewBox="0 0 794 348"><g transform="translate(-205 -127)"><defs><linearGradient id="og" gradientUnits="userSpaceOnUse" x1="384" y1="302" x2="637" y2="346"><stop offset="0" stop-color="#c07c00"/><stop offset="0.15" stop-color="#dc9000"/><stop offset="0.35" stop-color="#e29500"/><stop offset="0.52" stop-color="#d48c00"/><stop offset="0.68" stop-color="#b47400"/><stop offset="0.84" stop-color="#865600"/><stop offset="0.93" stop-color="#5e3e00"/><stop offset="1" stop-color="#583800"/></linearGradient><linearGradient id="bg2" gradientUnits="userSpaceOnUse" x1="560" y1="0" x2="640" y2="0"><stop offset="0" stop-color="#7b5300"/><stop offset="1" stop-color="#5a3b00"/></linearGradient></defs><path d="M390.0 279.9 L390.9 277.1 L392.0 274.5 L393.2 271.8 L394.7 269.3 L396.3 266.8 L398.2 264.3 L400.1 262.0 L402.3 259.7 L404.6 257.5 L407.1 255.4 L409.8 253.4 L412.6 251.5 L415.6 249.7 L418.7 247.9 L421.9 246.3 L425.3 244.8 L428.8 243.4 L432.5 242.1 L436.3 240.9 L440.2 239.8 L444.1 238.8 L448.2 238.0 L452.4 237.2 L456.7 236.6 L461.1 236.1 L465.5 235.7 L470.1 235.4 L474.6 235.3 L479.3 235.3 L484.0 235.4 L488.7 235.6 L493.5 235.9 L498.3 236.4 L503.1 236.9 L507.9 237.6 L512.7 238.4 L517.5 239.4 L522.4 240.4 L527.2 241.5 L531.9 242.8 L536.7 244.2 L541.4 245.6 L546.0 247.2 L550.6 248.9 L555.2 250.7 L559.7 252.6 L564.1 254.5 L568.4 256.6 L572.6 258.8 L576.7 261.0 L580.8 263.3 L584.7 265.7 L588.5 268.2 L592.2 270.7 L595.8 273.3 L599.2 276.0 L602.5 278.7 L605.7 281.5 L608.7 284.3 L611.5 287.2 L614.3 290.1 L616.8 293.0 L619.2 296.0 L621.4 299.0 L623.5 302.0 L625.3 305.1 L627.0 308.1 L628.6 311.2 L629.9 314.3 L631.1 317.3 L632.0 320.4 L632.8 323.5 L633.4 326.5 L633.8 329.5 L634.1 332.5 L634.1 335.5 L633.9 338.4 L633.6 341.3 L633.1 344.1 L632.3 346.9 L617.5 397.3 L616.6 400.0 L615.5 402.7 L614.3 405.3 L612.8 407.9 L611.2 410.4 L609.3 412.8 L607.4 415.2 L605.2 417.4 L602.9 419.6 L600.4 421.7 L597.7 423.7 L594.9 425.7 L591.9 427.5 L588.8 429.2 L585.6 430.8 L582.2 432.4 L578.7 433.8 L575.0 435.1 L571.2 436.3 L567.3 437.4 L563.4 438.3 L559.3 439.2 L555.1 439.9 L550.8 440.6 L546.4 441.1 L542.0 441.5 L537.4 441.7 L532.9 441.9 L528.2 441.9 L523.5 441.8 L518.8 441.6 L514.0 441.3 L509.2 440.8 L504.4 440.2 L499.6 439.5 L494.8 438.7 L490.0 437.8 L485.1 436.8 L480.3 435.6 L475.6 434.4 L470.8 433.0 L466.1 431.5 L461.5 429.9 L456.9 428.2 L452.3 426.5 L447.8 424.6 L443.4 422.6 L439.1 420.5 L434.9 418.4 L430.8 416.2 L426.7 413.8 L422.8 411.5 L419.0 409.0 L415.3 406.4 L411.7 403.8 L408.3 401.2 L405.0 398.5 L401.8 395.7 L398.8 392.9 L396.0 390.0 L393.2 387.1 L390.7 384.1 L388.3 381.2 L386.1 378.1 L384.0 375.1 L382.2 372.1 L380.5 369.0 L378.9 366.0 L377.6 362.9 L376.4 359.8 L375.5 356.8 L374.7 353.7 L374.1 350.7 L373.7 347.7 L373.4 344.7 L373.4 341.7 L373.6 338.8 L373.9 335.9 L374.4 333.0 L375.2 330.3Z" fill="url(#og)"/><ellipse cx="496.34999999999997" cy="363.76" rx="125.75" ry="73.58" transform="rotate(14.96 496.34999999999997 363.76)" fill="#7b5300"/><path d="M390.0 279.9 L390.9 277.1 L392.0 274.5 L393.2 271.8 L394.7 269.3 L396.3 266.8 L398.2 264.3 L400.1 262.0 L402.3 259.7 L404.6 257.5 L407.1 255.4 L409.8 253.4 L412.6 251.5 L415.6 249.7 L418.7 247.9 L421.9 246.3 L425.3 244.8 L428.8 243.4 L432.5 242.1 L436.3 240.9 L440.2 239.8 L444.1 238.8 L448.2 238.0 L452.4 237.2 L456.7 236.6 L461.1 236.1 L465.5 235.7 L470.1 235.4 L474.6 235.3 L479.3 235.3 L484.0 235.4 L488.7 235.6 L493.5 235.9 L498.3 236.4 L503.1 236.9 L507.9 237.6 L512.7 238.4 L517.5 239.4 L522.4 240.4 L527.2 241.5 L531.9 242.8 L536.7 244.2 L541.4 245.6 L546.0 247.2 L550.6 248.9 L555.2 250.7 L559.7 252.6 L564.1 254.5 L568.4 256.6 L572.6 258.8 L576.7 261.0 L580.8 263.3 L584.7 265.7 L588.5 268.2 L592.2 270.7 L595.8 273.3 L599.2 276.0 L602.5 278.7 L605.7 281.5 L608.7 284.3 L611.5 287.2 L614.3 290.1 L616.8 293.0 L619.2 296.0 L621.4 299.0 L623.5 302.0 L625.3 305.1 L627.0 308.1 L628.6 311.2 L629.9 314.3 L631.1 317.3 L632.0 320.4 L632.8 323.5 L633.4 326.5 L633.8 329.5 L634.1 332.5 L634.1 335.5 L633.9 338.4 L633.6 341.3 L633.1 344.1 L632.3 346.9 L617.5 397.3 L616.6 400.0 L615.5 402.7 L614.3 405.3 L612.8 407.9 L611.2 410.4 L609.3 412.8 L607.4 415.2 L605.2 417.4 L602.9 419.6 L600.4 421.7 L597.7 423.7 L594.9 425.7 L591.9 427.5 L588.8 429.2 L585.6 430.8 L582.2 432.4 L578.7 433.8 L575.0 435.1 L571.2 436.3 L567.3 437.4 L563.4 438.3 L559.3 439.2 L555.1 439.9 L550.8 440.6 L546.4 441.1 L542.0 441.5 L537.4 441.7 L532.9 441.9 L528.2 441.9 L523.5 441.8 L518.8 441.6 L514.0 441.3 L509.2 440.8 L504.4 440.2 L499.6 439.5 L494.8 438.7 L490.0 437.8 L485.1 436.8 L480.3 435.6 L475.6 434.4 L470.8 433.0 L466.1 431.5 L461.5 429.9 L456.9 428.2 L452.3 426.5 L447.8 424.6 L443.4 422.6 L439.1 420.5 L434.9 418.4 L430.8 416.2 L426.7 413.8 L422.8 411.5 L419.0 409.0 L415.3 406.4 L411.7 403.8 L408.3 401.2 L405.0 398.5 L401.8 395.7 L398.8 392.9 L396.0 390.0 L393.2 387.1 L390.7 384.1 L388.3 381.2 L386.1 378.1 L384.0 375.1 L382.2 372.1 L380.5 369.0 L378.9 366.0 L377.6 362.9 L376.4 359.8 L375.5 356.8 L374.7 353.7 L374.1 350.7 L373.7 347.7 L373.4 344.7 L373.4 341.7 L373.6 338.8 L373.9 335.9 L374.4 333.0 L375.2 330.3Z" fill="none" stroke="#f09400" stroke-width="1.5" opacity="0.5"/><path d="M390.0 279.9 L390.9 277.1 L392.0 274.5 L393.2 271.8 L394.7 269.3 L396.3 266.8 L398.2 264.3 L400.1 262.0 L402.3 259.7 L404.6 257.5 L407.1 255.4 L409.8 253.4 L412.6 251.5 L415.6 249.7 L418.7 247.9 L421.9 246.3 L425.3 244.8 L428.8 243.4 L432.5 242.1 L436.3 240.9 L440.2 239.8 L444.1 238.8 L448.2 238.0 L452.4 237.2 L456.7 236.6 L461.1 236.1 L465.5 235.7 L470.1 235.4 L474.6 235.3 L479.3 235.3 L484.0 235.4 L488.7 235.6 L493.5 235.9 L498.3 236.4 L503.1 236.9 L507.9 237.6 L512.7 238.4 L517.5 239.4 L522.4 240.4 L527.2 241.5 L531.9 242.8 L536.7 244.2 L541.4 245.6 L546.0 247.2 L550.6 248.9 L555.2 250.7 L559.7 252.6 L564.1 254.5 L568.4 256.6 L572.6 258.8 L576.7 261.0 L580.8 263.3 L584.7 265.7 L588.5 268.2 L592.2 270.7 L595.8 273.3 L599.2 276.0 L602.5 278.7 L605.7 281.5 L608.7 284.3 L611.5 287.2 L614.3 290.1 L616.8 293.0 L619.2 296.0 L621.4 299.0 L623.5 302.0 L625.3 305.1 L627.0 308.1 L628.6 311.2 L629.9 314.3 L631.1 317.3 L632.0 320.4 L632.8 323.5 L633.4 326.5 L633.8 329.5 L634.1 332.5 L634.1 335.5 L633.9 338.4 L633.6 341.3 L633.1 344.1 L632.3 346.9 L617.5 397.3 L616.6 400.0 L615.5 402.7 L614.3 405.3 L612.8 407.9 L611.2 410.4 L609.3 412.8 L607.4 415.2 L605.2 417.4 L602.9 419.6 L600.4 421.7 L597.7 423.7 L594.9 425.7 L591.9 427.5 L588.8 429.2 L585.6 430.8 L582.2 432.4 L578.7 433.8 L575.0 435.1 L571.2 436.3 L567.3 437.4 L563.4 438.3 L559.3 439.2 L555.1 439.9 L550.8 440.6 L546.4 441.1 L542.0 441.5 L537.4 441.7 L532.9 441.9 L528.2 441.9 L523.5 441.8 L518.8 441.6 L514.0 441.3 L509.2 440.8 L504.4 440.2 L499.6 439.5 L494.8 438.7 L490.0 437.8 L485.1 436.8 L480.3 435.6 L475.6 434.4 L470.8 433.0 L466.1 431.5 L461.5 429.9 L456.9 428.2 L452.3 426.5 L447.8 424.6 L443.4 422.6 L439.1 420.5 L434.9 418.4 L430.8 416.2 L426.7 413.8 L422.8 411.5 L419.0 409.0 L415.3 406.4 L411.7 403.8 L408.3 401.2 L405.0 398.5 L401.8 395.7 L398.8 392.9 L396.0 390.0 L393.2 387.1 L390.7 384.1 L388.3 381.2 L386.1 378.1 L384.0 375.1 L382.2 372.1 L380.5 369.0 L378.9 366.0 L377.6 362.9 L376.4 359.8 L375.5 356.8 L374.7 353.7 L374.1 350.7 L373.7 347.7 L373.4 344.7 L373.4 341.7 L373.6 338.8 L373.9 335.9 L374.4 333.0 L375.2 330.3Z" fill="none" stroke="#30cc10" stroke-width="1" shape-rendering="crispEdges"/><ellipse cx="496.34999999999997" cy="363.76" rx="125.75" ry="73.58" transform="rotate(14.96 496.34999999999997 363.76)" fill="none" stroke="#30cc10" stroke-width="1" shape-rendering="crispEdges"/><ellipse cx="511.15" cy="313.4" rx="125.75" ry="73.58" transform="rotate(14.96 511.15 313.4)" fill="none" stroke="#f09400" stroke-width="1.5" opacity="0.5"/><ellipse cx="511.15" cy="313.4" rx="125.75" ry="73.58" transform="rotate(14.96 511.15 313.4)" fill="none" stroke="#30cc10" stroke-width="1" shape-rendering="crispEdges"/><path d="M287.5 207.3 L292 207.3 L622 366.8" fill="none" stroke="#4a2878" stroke-width="1"/><path d="M401.3 259.6 L411 261 L409 266Z" fill="#30c020"/><path d="M621 366 L611 364.5 L613 359.5Z" fill="#30c020"/><path d="M504 313.8 L520.2 313.8 M509.2 308.1 L514.3 319.2" stroke="#f0a818" stroke-width="1.5"/><path d="M516.5 308.8 L508.4 317.7" stroke="#3a9a90" stroke-width="1.2"/><path d="M508.6 326 L505.3 335 M503.5 342.5 L500.3 351.2" stroke="#b02860" stroke-width="1.2"/><circle cx="496.6" cy="362.7" r="5" fill="#e8b830" stroke="#b89030" stroke-width="0.8"/><circle cx="496.6" cy="362.7" r="3.6" fill="#ffd000"/><path d="M325 313.5 L391 313.5 M310 363.5 L376 363.5" stroke="#4a2878" stroke-width="1.1"/><path d="M331.2 313.7 L326.4 329 M320.5 347.5 L315.3 363.2" stroke="#4a2878" stroke-width="1"/><path d="M331.2 313.7 L330.1 323.8 L326.2 322.6Z M315.3 363.2 L316.4 353.1 L320.3 354.3Z" fill="#4a2878"/><rect x="311.5" y="329.5" width="23.5" height="17.5" fill="#f2f3f6"/><rect x="247" y="198.7" width="40" height="18" fill="#f2f3f6"/><rect x="235" y="183" width="71.3" height="45.5" fill="none" stroke="#e8202a" stroke-width="4"/><path d="M713 246 L721 234.5 L735.5 234.5 L774 313 L759.5 313 L727.5 248 L719 259Z" fill="none" stroke="#48c0e4" stroke-width="1"/><path d="M769.0 249.0 C769.3 246.5 769.8 245.7 771.0 244.0 C772.2 242.3 773.5 240.4 776.0 239.0 C778.5 237.6 782.0 236.2 786.0 235.4 C790.0 234.6 795.3 234.2 800.0 234.4 C804.7 234.6 809.0 235.0 814.0 236.4 C819.0 237.8 824.7 240.2 830.0 243.0 C835.3 245.8 841.3 249.0 846.0 253.0 C850.7 257.0 854.7 262.3 858.0 267.0 C861.3 271.7 864.3 277.0 866.0 281.0 C867.7 285.0 868.0 287.7 868.0 291.0 C868.0 294.3 867.5 298.0 866.0 301.0 C864.5 304.0 862.3 307.0 859.0 309.0 C855.7 311.0 850.2 312.3 846.0 313.0 C841.8 313.7 838.7 313.7 834.0 313.0 C829.3 312.3 823.7 310.8 818.0 309.0 C812.3 307.2 805.7 305.3 800.0 302.0 C794.3 298.7 788.5 293.8 784.0 289.0 C779.5 284.2 775.5 278.0 773.0 273.0 C770.5 268.0 769.7 263.0 769.0 259.0 C768.3 255.0 768.7 251.5 769.0 249.0Z" fill="none" stroke="#48c0e4" stroke-width="1" stroke-linejoin="round"/><path d="M781.0 259.0 C781.2 257.5 781.2 256.2 782.0 254.0 C782.8 251.8 784.0 247.7 786.0 246.0 C788.0 244.3 790.3 244.3 794.0 244.0 C797.7 243.7 803.7 243.5 808.0 244.0 C812.3 244.5 815.3 244.8 820.0 247.0 C824.7 249.2 831.7 253.3 836.0 257.0 C840.3 260.7 843.3 265.2 846.0 269.0 C848.7 272.8 850.5 276.7 852.0 280.0 C853.5 283.3 855.0 286.5 855.0 289.0 C855.0 291.5 853.5 292.8 852.0 295.0 C850.5 297.2 849.0 300.3 846.0 302.0 C843.0 303.7 838.0 304.7 834.0 305.0 C830.0 305.3 826.0 304.8 822.0 304.0 C818.0 303.2 814.3 302.5 810.0 300.0 C805.7 297.5 800.0 293.2 796.0 289.0 C792.0 284.8 788.5 279.3 786.0 275.0 C783.5 270.7 781.8 265.7 781.0 263.0 C780.2 260.3 780.8 260.5 781.0 259.0Z" fill="none" stroke="#48c0e4" stroke-width="1" stroke-linejoin="round"/><path d="M875.5 249.0 C875.8 246.5 876.3 245.7 877.5 244.0 C878.7 242.3 880.0 240.4 882.5 239.0 C885.0 237.6 888.5 236.2 892.5 235.4 C896.5 234.6 901.8 234.2 906.5 234.4 C911.2 234.6 915.5 235.0 920.5 236.4 C925.5 237.8 931.2 240.2 936.5 243.0 C941.8 245.8 947.8 249.0 952.5 253.0 C957.2 257.0 961.2 262.3 964.5 267.0 C967.8 271.7 970.8 277.0 972.5 281.0 C974.2 285.0 974.5 287.7 974.5 291.0 C974.5 294.3 974.0 298.0 972.5 301.0 C971.0 304.0 968.8 307.0 965.5 309.0 C962.2 311.0 956.7 312.3 952.5 313.0 C948.3 313.7 945.2 313.7 940.5 313.0 C935.8 312.3 930.2 310.8 924.5 309.0 C918.8 307.2 912.2 305.3 906.5 302.0 C900.8 298.7 895.0 293.8 890.5 289.0 C886.0 284.2 882.0 278.0 879.5 273.0 C877.0 268.0 876.2 263.0 875.5 259.0 C874.8 255.0 875.2 251.5 875.5 249.0Z" fill="none" stroke="#48c0e4" stroke-width="1" stroke-linejoin="round"/><path d="M887.5 259.0 C887.7 257.5 887.7 256.2 888.5 254.0 C889.3 251.8 890.5 247.7 892.5 246.0 C894.5 244.3 896.8 244.3 900.5 244.0 C904.2 243.7 910.2 243.5 914.5 244.0 C918.8 244.5 921.8 244.8 926.5 247.0 C931.2 249.2 938.2 253.3 942.5 257.0 C946.8 260.7 949.8 265.2 952.5 269.0 C955.2 272.8 957.0 276.7 958.5 280.0 C960.0 283.3 961.5 286.5 961.5 289.0 C961.5 291.5 960.0 292.8 958.5 295.0 C957.0 297.2 955.5 300.3 952.5 302.0 C949.5 303.7 944.5 304.7 940.5 305.0 C936.5 305.3 932.5 304.8 928.5 304.0 C924.5 303.2 920.8 302.5 916.5 300.0 C912.2 297.5 906.5 293.2 902.5 289.0 C898.5 284.8 895.0 279.3 892.5 275.0 C890.0 270.7 888.3 265.7 887.5 263.0 C886.7 260.3 887.3 260.5 887.5 259.0Z" fill="none" stroke="#48c0e4" stroke-width="1" stroke-linejoin="round"/></g></svg>
<div class="t" style="left:251.0px;top:159.2px;font-size:17.5px;color:#ee1a1a;transform:scaleX(0.930);letter-spacing:0.00px;font-weight:bold;">d1</div>
<div class="t" style="left:261.0px;top:201.8px;font-size:13px;color:#4a2878;transform:scaleX(0.900);letter-spacing:0.33px;-webkit-text-stroke:0">100</div>
<svg style="position:absolute;left:251px;top:202px" width="12" height="14" viewBox="0 0 12 14"><ellipse cx="5.8" cy="6.5" rx="3.4" ry="4.3" fill="none" stroke="#4a2878" stroke-width="1.2" transform="rotate(15 5.8 6.5)"/><path d="M3 12.5 L8.8 0.8" stroke="#4a2878" stroke-width="1.1"/></svg>
<div class="t" style="left:316.5px;top:332.1px;font-size:13.5px;color:#4a2878;transform:scaleX(0.866);letter-spacing:0.00px;-webkit-text-stroke:0">25</div>
<div class="t" style="left:628.5px;top:302.5px;font-size:13px;color:#f0aa3a;transform:scaleX(0.996);letter-spacing:0.00px;-webkit-text-stroke:0">Section 1</div>
</body></html>
